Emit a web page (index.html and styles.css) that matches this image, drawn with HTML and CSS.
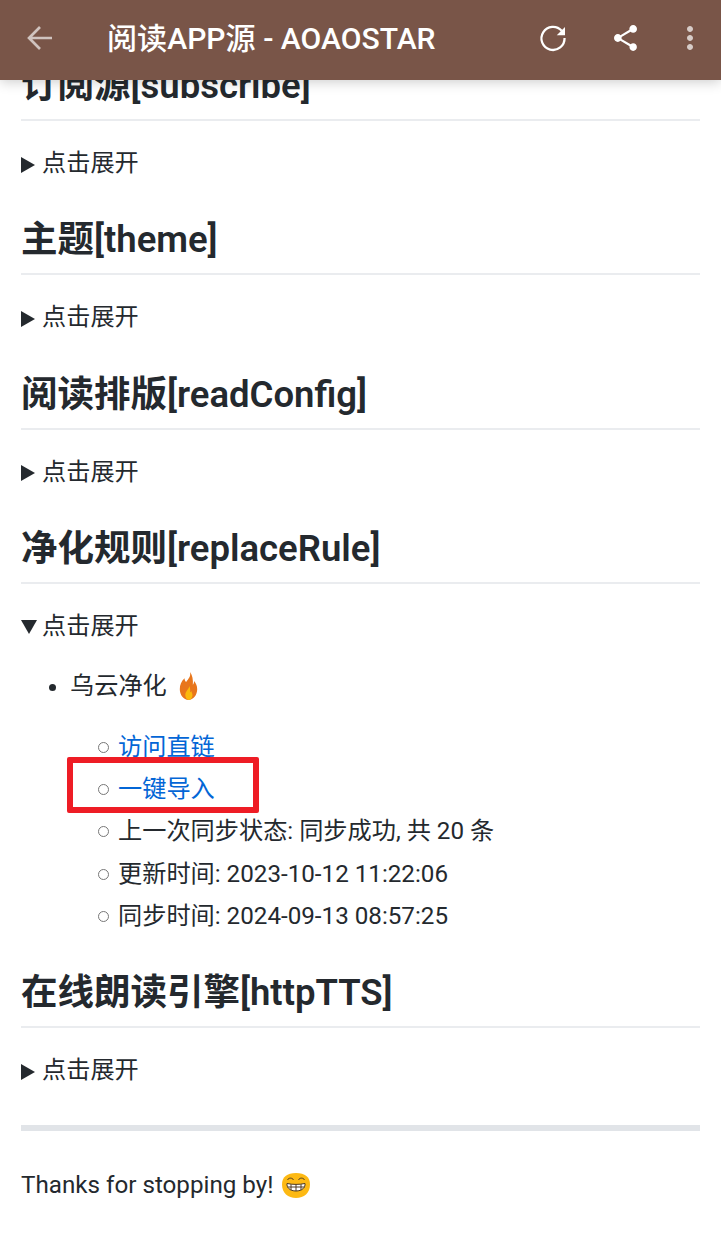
FILE: index.html
```html
<!DOCTYPE html>
<html lang="zh-CN">
<head>
    <meta charset="UTF-8">
    <meta name="viewport" content="width=device-width, initial-scale=1.0">
    <title>阅读APP源 - AOAOSTAR</title>
    <link rel="stylesheet" href="styles.css">
</head>
<body>
    <header class="app-bar">
        <svg class="back-icon" viewBox="0 0 24 24"><path d="M20 12H5M12 4.700 4.700 12l7.300 7.300" fill="none" stroke="#fff" stroke-width="1.800"/></svg>
        <div class="app-title">阅读APP源 - AOAOSTAR</div>
        <svg class="bar-icon refresh-icon" viewBox="0 0 24 24"><path d="M17.800 7.200A7.700 7.700 0 1 0 19.700 12" fill="none" stroke="#fff" stroke-width="1.500"/><path d="M14.500 10.200H20V4.700z"/></svg>
        <svg class="share-icon" viewBox="3 2 18 20" preserveAspectRatio="none"><path d="M18 16.080c-.76 0-1.440.3-1.960.77L8.910 12.700c.05-.23.09-.46.09-.7s-.04-.47-.09-.7l7.050-4.110c.54.5 1.250.81 2.040.81 1.660 0 3-1.340 3-3s-1.340-3-3-3-3 1.340-3 3c0 .24.04.47.09.7L8.040 9.810C7.500 9.310 6.790 9 6 9c-1.660 0-3 1.340-3 3s1.340 3 3 3c.79 0 1.500-.31 2.040-.81l7.120 4.160c-.05.21-.08.43-.08.65 0 1.610 1.310 2.920 2.920 2.920s2.920-1.310 2.920-2.920-1.310-2.920-2.920-2.920z"/></svg>
        <svg class="bar-icon more-icon" viewBox="0 0 24 24"><path d="M12 8c1.100 0 2-.9 2-2s-.9-2-2-2-2 .9-2 2 .9 2 2 2zm0 2c-1.100 0-2 .9-2 2s.9 2 2 2 2-.9 2-2-.9-2-2-2zm0 6c-1.100 0-2 .9-2 2s.9 2 2 2 2-.9 2-2-.9-2-2-2z"/></svg>
    </header>

    <main class="markdown-body">
        <h2>订阅源[subscribe]</h2>
        <details><summary>点击展开</summary></details>

        <h2>主题[theme]</h2>
        <details><summary>点击展开</summary></details>

        <h2>阅读排版[readConfig]</h2>
        <details><summary>点击展开</summary></details>

        <h2>净化规则[replaceRule]</h2>
        <details open>
            <summary>点击展开</summary>
            <ul class="source-list">
                <li>
                    <p>乌云净化
                        <svg class="emoji" viewBox="0 0 24 34" preserveAspectRatio="none"><path fill="#e8761c" d="M14 0c1 6-2 8-5 12-1.500-1-2-3-2-4.500C3 11 1 15.500 1 21c0 7 5 13 11 13s11-6 11-13c0-4-1.500-7.500-4-10 0 2-.5 3.500-1.500 4.500C18 9.500 17 4 14 0z"/><path fill="#fbb90c" d="M13 17c0 3.500-5 6-5 11 0 3 2 6 4.500 6s4.500-3 4.500-6c0-2-1-3.500-1.500-5-.5 1-1 1.500-1.500 1.500.5-2.500 0-5.500-1-7.500z"/></svg>
                    </p>
                    <ul class="sub-list">
                        <li><a href="#">访问直链</a></li>
                        <li><a href="#">一键导入</a></li>
                        <li>上一次同步状态: 同步成功, 共 20 条</li>
                        <li>更新时间: 2023-10-12 11:22:06</li>
                        <li>同步时间: 2024-09-13 08:57:25</li>
                    </ul>
                </li>
            </ul>
        </details>

        <h2>在线朗读引擎[httpTTS]</h2>
        <details><summary>点击展开</summary></details>

        <hr>
        <p class="thanks">Thanks for stopping by!
            <svg class="emoji grin" viewBox="0 0 28 25"><path fill="#fdb913" d="M14 0C23 0 28 4 28 11.500 28 20 22 25 14 25 6 25 0 20 0 11.500 0 4 5 0 14 0z"/><path fill="#fff" d="M5 10.500c6 1.200 12 1.200 18 0 .5 4-3 7.500-9 7.500s-9.500-3.500-9-7.500z"/><path fill="none" stroke="#4e3b22" stroke-width="1" d="M5 10.500c6 1.200 12 1.200 18 0 .5 4-3 7.500-9 7.500s-9.500-3.500-9-7.500zM9 11.200v6M14 11.500V18M19 11.200v6M5.500 14h17M5.500 7c1-2.500 5-2.500 6 0M16.500 7c1-2.500 5-2.500 6 0"/></svg>
        </p>
    </main>

    <div class="red-box"></div>
</body>
</html>
```

FILE: styles.css
```css
* {
    box-sizing: border-box;
}
html {
    overflow: hidden;
}
body {
    margin: 0;
    height: 1248px;
    overflow: hidden;
    position: relative;
    background-color: #fff;
    color: #24292e;
    font-family: Roboto, "Noto Sans CJK SC", sans-serif;
    font-size: 24.2px;
    line-height: 1.5;
}

/* 顶部栏 */
.app-bar {
    position: relative;
    z-index: 2;
    display: flex;
    align-items: center;
    height: 80px;
    padding: 0 0 4px 22px;
    background-color: #795548;
    box-shadow: 0 2px 12px rgba(0, 0, 0, 0.2);
    color: #fff;
}
.app-bar svg {
    fill: #fff;
    flex: none;
}
.back-icon {
    width: 36px;
    height: 36px;
    opacity: 0.65;
}
.app-title {
    flex: 1;
    margin-left: 49px;
    padding-top: 1px;
    font-size: 30.1px;
    font-weight: 500;
    white-space: nowrap;
}
.bar-icon {
    width: 36px;
    height: 36px;
}
.refresh-icon {
    margin-right: 43px;
}
.share-icon {
    width: 23px;
    height: 26px;
    margin-right: 35px;
}
.more-icon {
    margin-right: 13px;
    opacity: 0.7;
}

/* 正文 */
.markdown-body {
    margin-top: -17px;
    padding: 0 21px;
}
h2 {
    margin: 36px 0 24px;
    padding-bottom: 10.35px;
    border-bottom: 2px solid #eaecef;
    font-size: 36.5px;
    font-weight: 600;
    line-height: 1.25;
}
.markdown-body > h2:first-child {
    margin-top: 0;
}
details {
    margin-bottom: 24px;
}
summary {
    display: flex;
    align-items: center;
    height: 36.3px;
    list-style: none;
}
summary::before {
    content: "";
    width: 0;
    height: 0;
    margin: 3px 7px 0 0;
    border-style: solid;
    border-color: transparent transparent transparent #24292e;
    border-width: 8px 0 8px 14px;
}
details[open] summary::before {
    margin-right: 5px;
    border-color: #24292e transparent transparent;
    border-width: 14px 8px 0;
}
p {
    margin: 0 0 24.6px;
}
ul {
    margin: 0;
    padding-left: 49px;
}
.source-list {
    margin-top: 24px;
}
.sub-list {
    list-style: none;
}
.sub-list li {
    margin-top: 5.9px;
}
.sub-list li::before {
    content: "";
    display: inline-block;
    width: 9px;
    height: 9px;
    margin: 0 9px 2px -21px;
    border: 1px solid #777;
    border-radius: 50%;
}
a {
    color: #0366d6;
    text-decoration: none;
}
hr {
    height: 6px;
    margin: 36.5px 0 36px;
    border: 0;
    background-color: #e1e4e8;
}
.thanks {
    margin: 0;
}
.emoji {
    width: 19px;
    height: 28px;
    vertical-align: -6px;
    margin-left: 6px;
}
.emoji.grin {
    width: 28px;
    height: 25px;
    vertical-align: -5px;
    margin-left: 3px;
}

/* 标注红框 */
.red-box {
    position: absolute;
    left: 67px;
    top: 757px;
    width: 192px;
    height: 56px;
    border: 6px solid #ee1c25;
    border-radius: 2px;
}
```
